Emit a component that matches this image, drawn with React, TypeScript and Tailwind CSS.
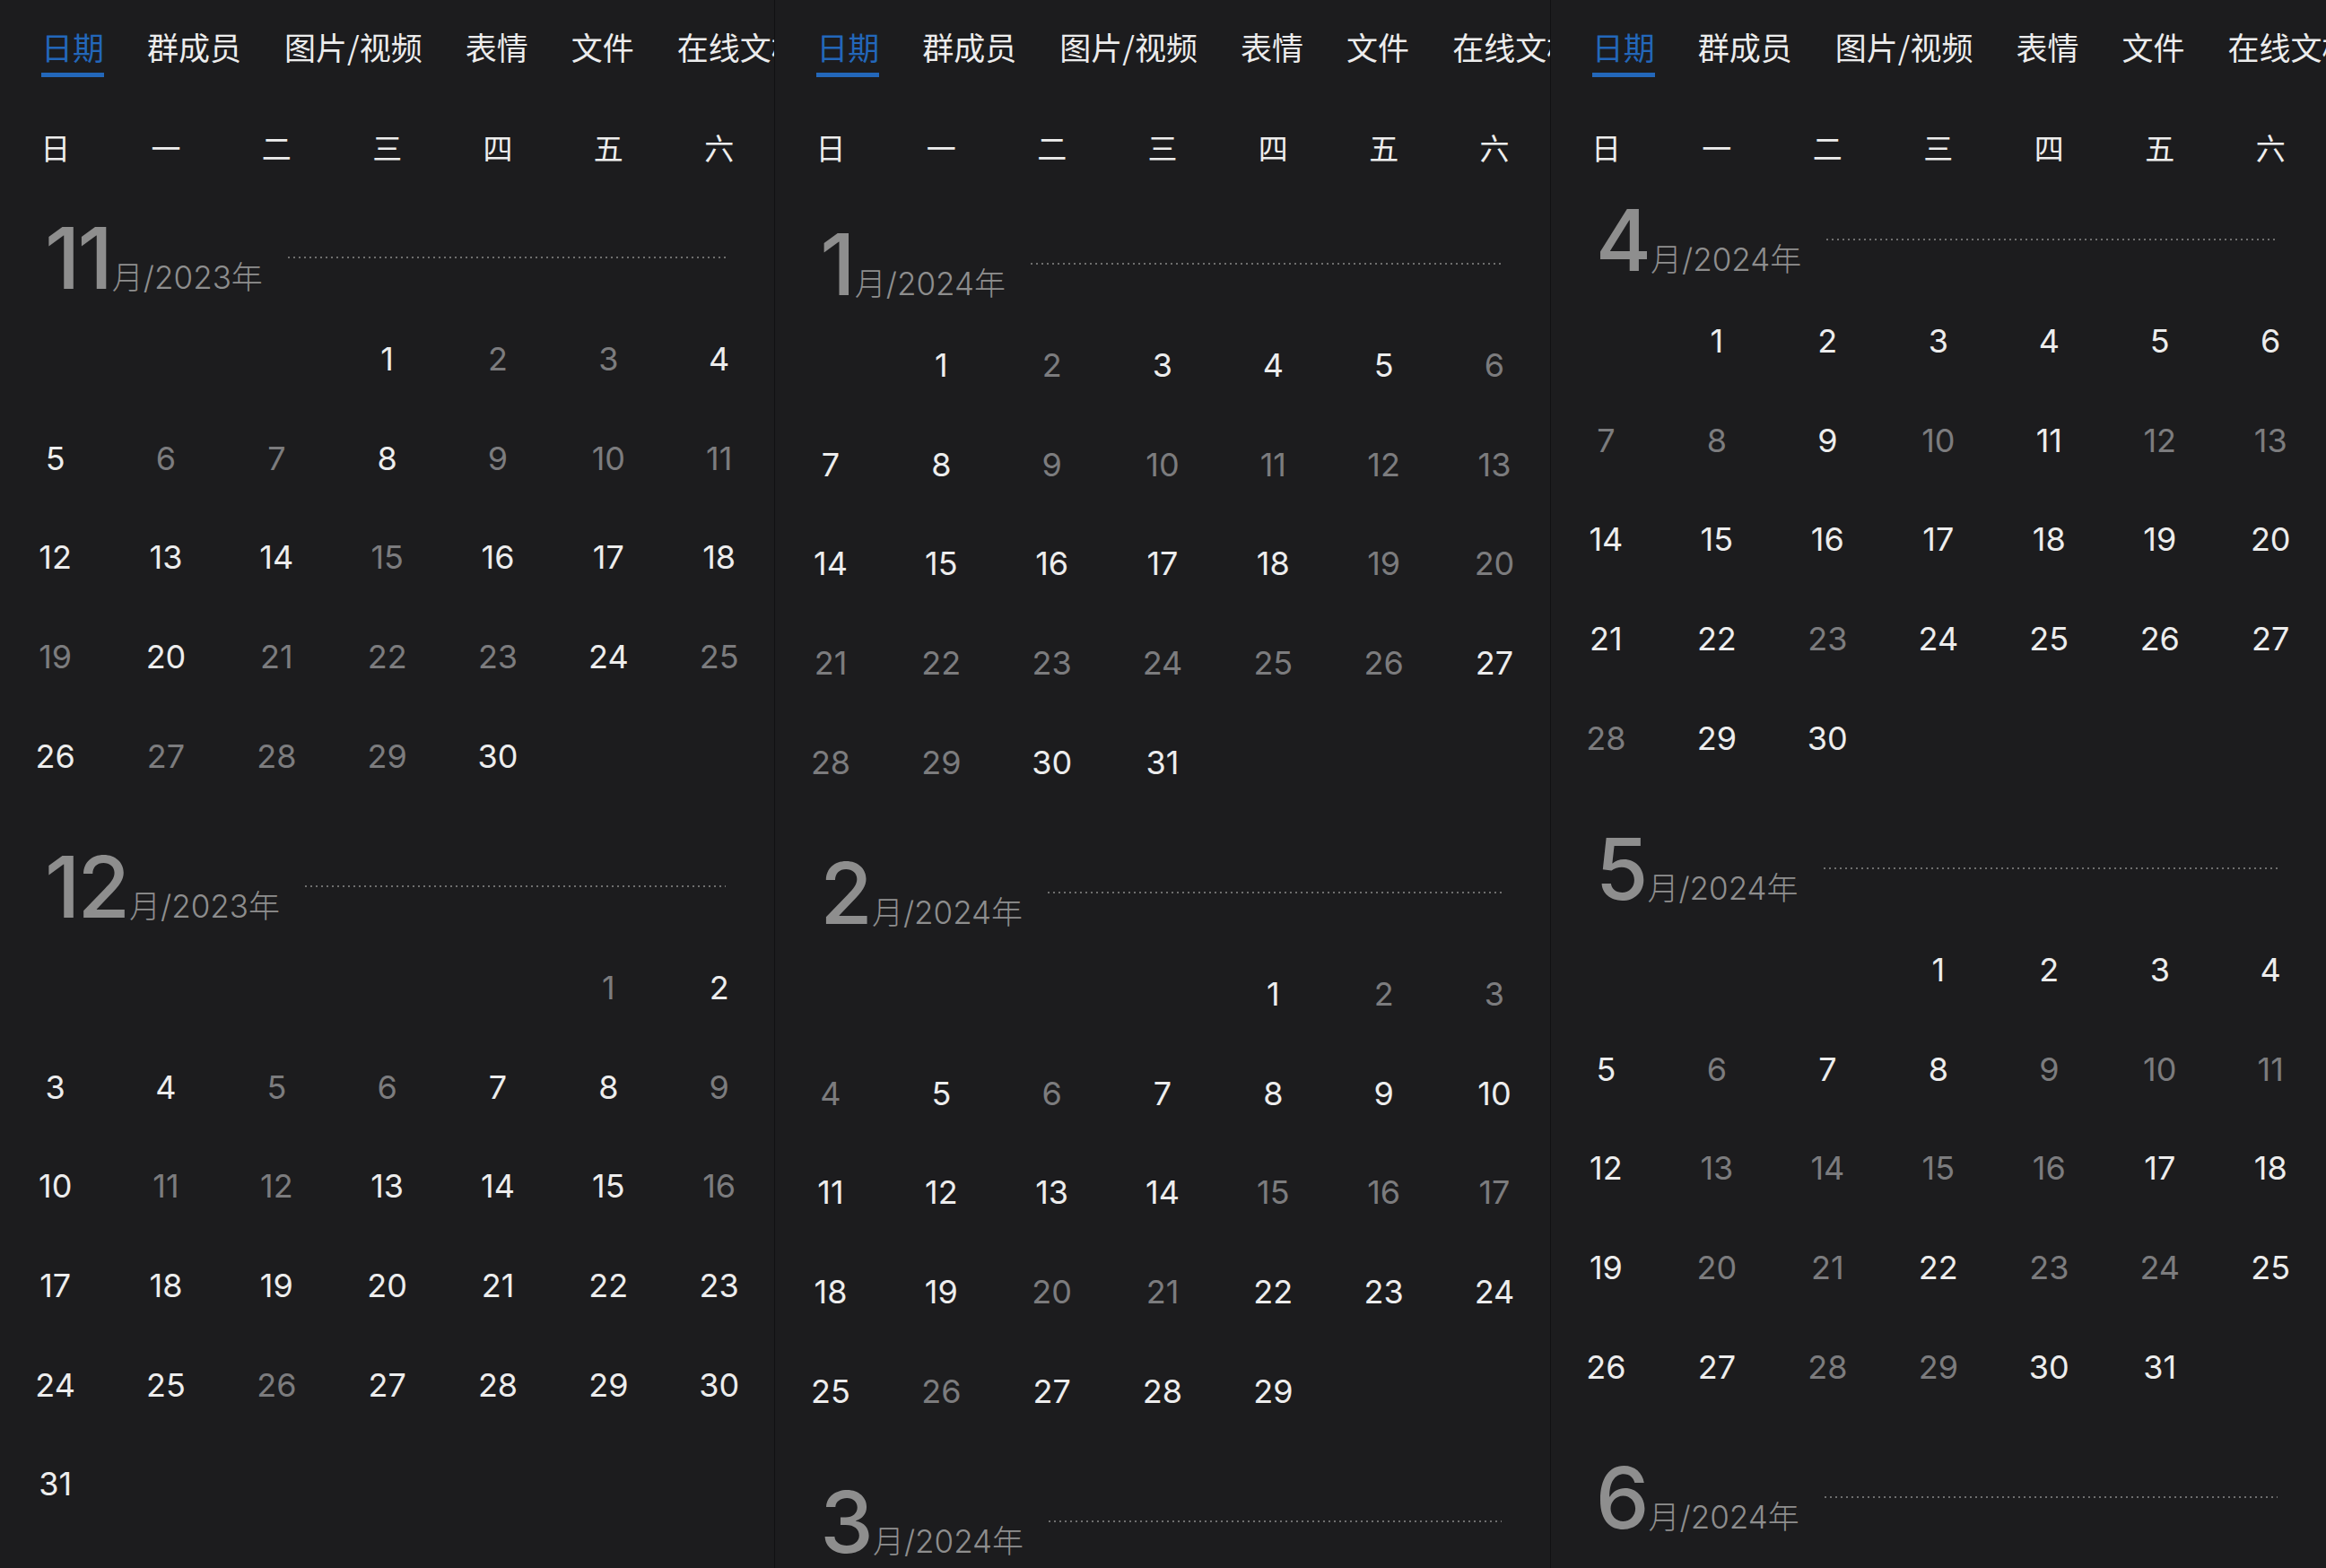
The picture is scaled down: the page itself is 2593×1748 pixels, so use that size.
const tabs = ["日期", "群成员", "图片/视频", "表情", "文件", "在线文档"];
const weekdays = ["日", "一", "二", "三", "四", "五", "六"];

type Month = { m: number; y: number; start: number; days: number; gray: number[] };

const months: Record<string, Month> = {
  nov: { m: 11, y: 2023, start: 3, days: 30, gray: [2, 3, 6, 7, 9, 10, 11, 15, 19, 21, 22, 23, 25, 27, 28, 29] },
  dec: { m: 12, y: 2023, start: 5, days: 31, gray: [1, 5, 6, 9, 11, 12, 16, 26] },
  jan: { m: 1, y: 2024, start: 1, days: 31, gray: [2, 6, 9, 10, 11, 12, 13, 19, 20, 21, 22, 23, 24, 25, 26, 28, 29] },
  feb: { m: 2, y: 2024, start: 4, days: 29, gray: [2, 3, 4, 6, 15, 16, 17, 20, 21, 26] },
  mar: { m: 3, y: 2024, start: 5, days: 31, gray: [] },
  apr: { m: 4, y: 2024, start: 1, days: 30, gray: [7, 8, 10, 12, 13, 23, 28] },
  may: { m: 5, y: 2024, start: 3, days: 31, gray: [6, 9, 10, 11, 13, 14, 15, 16, 20, 21, 23, 24, 28, 29] },
  jun: { m: 6, y: 2024, start: 6, days: 30, gray: [] },
};

const MonthBlock = ({ month }: { month: Month }) => {
  const cells: (number | null)[] = [];
  for (let i = 0; i < month.start; i++) cells.push(null);
  for (let d = 1; d <= month.days; d++) cells.push(d);

  return (
    <div className="mb-[43px]">
      <div className="flex items-start pr-[54px] h-[95px]">
        <div className="pl-[50px] leading-none text-[95px] whitespace-nowrap text-[#8e8e8e] font-['Inter','Noto_Sans_CJK_SC',sans-serif]">
          <span className="font-medium tracking-[-3px]">{month.m}</span>
          <span className="ml-[2px] text-[35px] font-light">{"月/" + month.y + "年"}</span>
        </div>
        <div className="flex-1 ml-[28px] mt-[46px] h-[2px] bg-[repeating-linear-gradient(to_right,#6e6e6e_0,#6e6e6e_2px,transparent_2px,transparent_6px)]" />
      </div>
      <div className="mt-[10px] grid grid-cols-7">
        {cells.map((d, i) => (
          <div
            key={i}
            className={
              "h-[110.6px] flex items-center justify-center text-[36px] font-['Inter',sans-serif] " +
              (d !== null && month.gray.includes(d) ? "text-[#7c7c7e]" : "text-[#ededed]")
            }
          >
            {d}
          </div>
        ))}
      </div>
    </div>
  );
};

const Panel = ({ list, offset, last }: { list: Month[]; offset: string; last?: boolean }) => (
  <div className={"flex flex-col h-[1748px] overflow-hidden " + (last ? "" : "border-r border-[#111113]")}>
    <div className="flex gap-[48px] pl-[46px] pt-[34px] whitespace-nowrap font-['Noto_Sans_CJK_SC',sans-serif] text-[35px] leading-none">
      {tabs.map((t, i) => (
        <div key={t} className="flex flex-col shrink-0">
          <span className={i === 0 ? "text-[#2367ba]" : "text-[#ececec]"}>{t}</span>
          <div className={"mt-[12px] h-[5px] " + (i === 0 ? "bg-[#2367ba]" : "")} />
        </div>
      ))}
    </div>
    <div className="grid grid-cols-7 pt-[62px] font-['Noto_Sans_CJK_SC',sans-serif] text-[33px] leading-none text-[#ededed]">
      {weekdays.map((w) => (
        <div key={w} className="flex justify-center h-[33px]">
          {w}
        </div>
      ))}
    </div>
    <div className={offset}>
      {list.map((m) => (
        <MonthBlock key={m.m} month={m} />
      ))}
    </div>
  </div>
);

export default function App() {
  return (
    <div className="w-[2593px] h-[1748px] overflow-hidden bg-[#1c1c1e] grid grid-cols-3">
      <Panel list={[months.nov, months.dec]} offset="pt-[59px]" />
      <Panel list={[months.jan, months.feb, months.mar]} offset="pt-[66px]" />
      <Panel list={[months.apr, months.may, months.jun]} offset="pt-[39px]" last />
    </div>
  );
}
